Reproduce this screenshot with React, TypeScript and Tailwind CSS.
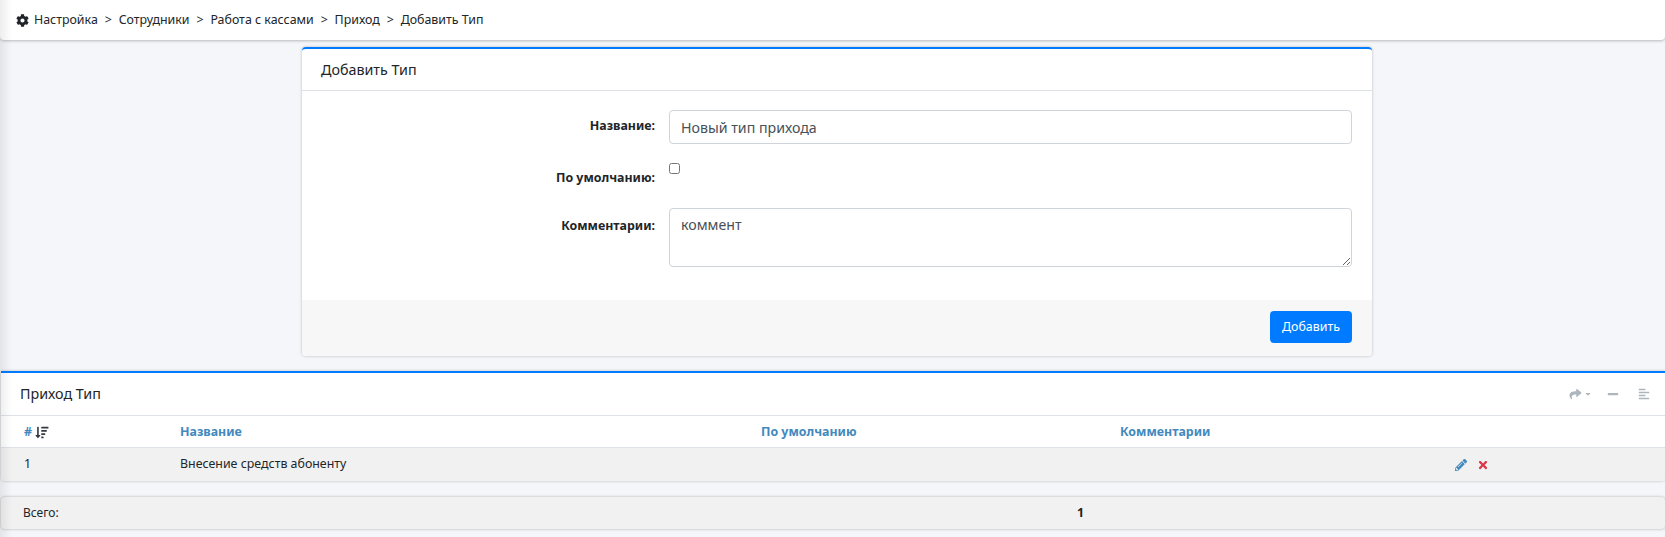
import { FaCog, FaShare, FaCaretDown, FaMinus, FaAlignLeft, FaPencilAlt, FaTimes, FaSortAmountDown } from "react-icons/fa";

const crumbs = ["Настройка", "Сотрудники", "Работа с кассами", "Приход", "Добавить Тип"];

export default function App() {
  return (
    <div className="relative h-[537px] w-full overflow-hidden bg-[#f4f6f9] font-['Noto_Sans','Open_Sans',sans-serif] text-[12.4px] text-[#212529]">
      <div className="pointer-events-none absolute inset-y-0 left-0 z-10 w-3 bg-gradient-to-r from-[#00000012] to-transparent" />

      <div className="flex h-10 items-center rounded-b bg-white pl-[16px] text-[12.4px] shadow-[0_1px_3px_rgba(0,0,0,0.25)]">
        <FaCog className="mr-[5px] h-[13px] w-[13px] text-[#212529]" />
        {crumbs.map((c, i) => (
          <span key={c} className="flex items-center">
            {i > 0 && <span className="mx-[6.9px]">&gt;</span>}
            <span>{c}</span>
          </span>
        ))}
      </div>

      <div className="ml-[302px] mt-[7px] w-[1070px] overflow-hidden rounded border-t-2 border-[#007bff] bg-white shadow-[0_0_3px_rgba(0,0,0,0.25)]">
        <div className="flex h-[42px] items-center border-b border-[#dee2e6] px-[19px] text-[14.3px]">Добавить Тип</div>
        <div className="h-[209px] pr-5 pt-[19px]">
          <div className="grid grid-cols-[353px_683px] gap-x-[14px]">
            <label className="mt-[7px] h-[46px] text-right font-bold">Название:</label>
            <input
              readOnly
              value="Новый тип прихода"
              className="h-[34px] w-full rounded border border-[#ced4da] px-[11px] text-[14.2px] text-[#495057] outline-none"
            />
            <label className="mt-[6px] h-[39px] text-right font-bold">По умолчанию:</label>
            <div>
              <input type="checkbox" className="block h-[11px] w-[11px]" />
            </div>
            <label className="mt-[9px] text-right font-bold">Комментарии:</label>
            <textarea
              readOnly
              value="коммент"
              className="h-[59px] w-full rounded border border-[#ced4da] px-[11px] py-[5px] text-[14.2px] text-[#495057] outline-none"
            />
          </div>
        </div>
        <div className="flex h-[56px] items-center justify-end bg-[#f7f7f7] pb-[2px] pr-5">
          <button className="h-8 w-[82px] rounded bg-[#007bff] text-[12.4px] text-white">Добавить</button>
        </div>
      </div>

      <div className="ml-px mt-[15px] overflow-hidden rounded-b border-t-2 border-[#007bff] bg-white shadow-[0_0_3px_rgba(0,0,0,0.25)]">
        <div className="flex h-[43px] items-center border-b border-[#dee2e6] pl-[19px] pr-[15px] text-[14.3px]">
          <span>Приход Тип</span>
          <div className="ml-auto flex items-center text-[#adb5bd]">
            <FaShare className="h-3 w-[17px]" />
            <FaCaretDown className="ml-[1px] h-2 w-[6px]" />
            <FaMinus className="ml-4 h-3 w-3" />
            <FaAlignLeft className="ml-[19px] h-3 w-3" />
          </div>
        </div>
        <div className="grid h-8 grid-cols-[156px_581px_359px_1fr] items-center border-b border-[#dee2e6] pl-[23px] pt-[2px] font-bold text-[#4289bd]">
          <span className="flex items-center gap-[3px]">
            # <FaSortAmountDown className="h-[13px] w-[14px] text-[#343a40]" />
          </span>
          <span>Название</span>
          <span>По умолчанию</span>
          <span>Комментарии</span>
        </div>
        <div className="grid h-[33px] grid-cols-[156px_581px_359px_335px_1fr] items-center bg-[#f1f1f1] pl-[23px]">
          <span>1</span>
          <span>Внесение средств абоненту</span>
          <span />
          <span />
          <span className="flex items-center gap-[11px]">
            <FaPencilAlt className="h-3 w-3 text-[#4289bd]" />
            <FaTimes className="h-3 w-[10px] text-[#dc3545]" />
          </span>
        </div>
      </div>

      <div className="ml-px mt-[16px] grid h-8 grid-cols-[1054px_auto_1fr] items-center rounded bg-[#f1f1f1] pl-[22px] text-[12px] shadow-[0_0_3px_rgba(0,0,0,0.3)]">
        <span>Всего:</span>
        <span className="text-[12.4px] font-bold">1</span>
        <span />
      </div>
    </div>
  );
}
